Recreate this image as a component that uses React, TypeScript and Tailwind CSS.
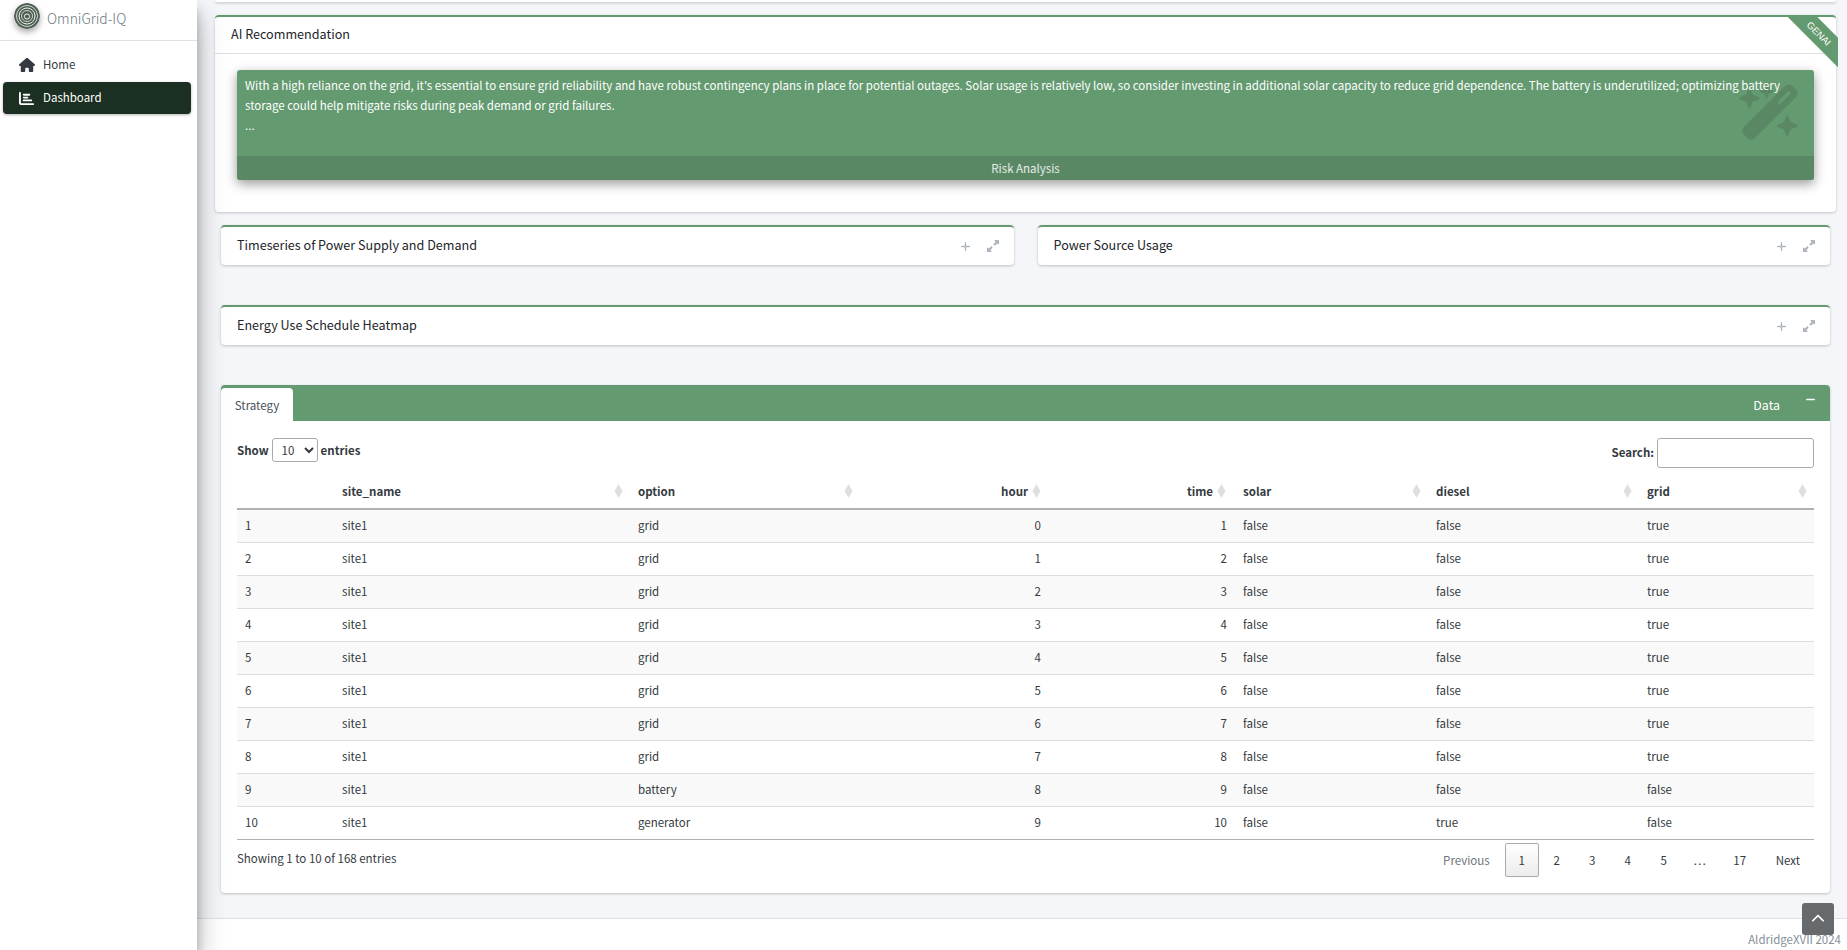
import { FaHouse, FaChartBar, FaUpRightAndDownLeftFromCenter, FaPlus, FaMinus, FaChevronUp, FaWandMagicSparkles } from "react-icons/fa6"

const rows = [
  ["1", "site1", "grid", "0", "1", "false", "false", "true"],
  ["2", "site1", "grid", "1", "2", "false", "false", "true"],
  ["3", "site1", "grid", "2", "3", "false", "false", "true"],
  ["4", "site1", "grid", "3", "4", "false", "false", "true"],
  ["5", "site1", "grid", "4", "5", "false", "false", "true"],
  ["6", "site1", "grid", "5", "6", "false", "false", "true"],
  ["7", "site1", "grid", "6", "7", "false", "false", "true"],
  ["8", "site1", "grid", "7", "8", "false", "false", "true"],
  ["9", "site1", "battery", "8", "9", "false", "false", "false"],
  ["10", "site1", "generator", "9", "10", "false", "true", "false"],
]

function Logo() {
  return (
    <svg width="26" height="26" viewBox="0 0 26 26" className="mb-[4px] rounded-full shadow-[0_3px_6px_rgba(0,0,0,0.35)]">
      <circle cx="13" cy="13" r="13" fill="#4d5f52" />
      <circle cx="13" cy="13" r="10.5" fill="none" stroke="#dfe5df" strokeWidth="0.9" />
      <circle cx="13" cy="13" r="8" fill="none" stroke="#eef1ee" strokeWidth="1" />
      <circle cx="13" cy="13" r="5.5" fill="none" stroke="#dfe5df" strokeWidth="0.9" />
      <circle cx="13" cy="13.5" r="2.6" fill="none" stroke="#f4f6f4" strokeWidth="1" />
    </svg>
  )
}

function SortIcon({ className }: { className: string }) {
  return (
    <svg width="9" height="14" viewBox="0 0 9 14" className={"absolute top-1/2 -translate-y-1/2 " + className}>
      <path d="M4.5 0 L8.5 7 L4.5 14 L0.5 7 Z" fill="#dfdfdf" />
    </svg>
  )
}

function CollapsedBox({ title, className }: { title: string; className: string }) {
  return (
    <div className={"flex h-[40px] items-center justify-between rounded-[4px] border-t-2 border-[#649a70] bg-white pr-[15px] pl-4 shadow-[0_1px_3px_rgba(0,0,0,0.22)] " + className}>
      <span className="pb-[2px] text-[12.6px] leading-[20px] text-[#212529]">{title}</span>
      <div className="flex items-center gap-[16px] text-[#adb5bd]">
        <FaPlus size={11} />
        <FaUpRightAndDownLeftFromCenter size={12} />
      </div>
    </div>
  )
}

export default function App() {
  const headers = ["", "site_name", "option", "hour", "time", "solar", "diesel", "grid"]

  return (
    <div className="flex h-[950px] overflow-hidden bg-[#f4f6f9] font-['Noto_Sans_CJK_SC','Noto_Sans',sans-serif] text-[11.5px] leading-[20px] text-[#343a40]">
      {/* Sidebar */}
      <aside className="z-10 flex w-[197px] shrink-0 flex-col bg-white shadow-[0_14px_28px_rgba(0,0,0,0.28),0_10px_10px_rgba(0,0,0,0.22)]">
        <div className="flex h-[41px] items-center gap-[7px] border-b border-[#dee2e6] pb-[4px] pl-[14px]">
          <Logo />
          <span className="text-[13.9px] font-light text-[#6c757d]">OmniGrid-IQ</span>
        </div>
        <nav className="flex flex-col gap-[1px] pt-[7px] pr-[6px] pl-[3px]">
          <div className="flex h-[33px] items-center gap-[8px] pl-4 text-[#343a40]">
            <FaHouse size={16} />
            <span className="pb-[2px]">Home</span>
          </div>
          <div className="flex h-[32px] items-center gap-[9px] rounded-[4px] bg-[#1b3022] pl-4 text-white shadow-[0_1px_3px_rgba(0,0,0,0.3)]">
            <FaChartBar size={15} />
            <span className="pb-[2px]">Dashboard</span>
          </div>
        </nav>
      </aside>

      {/* Main */}
      <main className="flex min-w-0 flex-1 flex-col">
        <div className="flex h-[918px] flex-col px-[18px]">
          <div className="mr-[-7px] h-[2px] rounded-b-[4px] bg-white shadow-[0_1px_3px_rgba(0,0,0,0.25)]" />

          {/* AI card */}
          <div className="relative mt-[13px] mr-[-7px] h-[197px] rounded-[4px] border-t-2 border-[#649a70] bg-white shadow-[0_1px_3px_rgba(0,0,0,0.2)]">
            <div className="flex h-[37px] items-center border-b border-[#dee2e6] pb-[2px] pl-4 text-[12.6px] text-[#212529]">
              AI Recommendation
            </div>
            <div className="absolute top-[-2px] right-[-2px] h-[52px] w-[52px] overflow-hidden">
              <div className="absolute top-[8px] left-[-7px] flex h-[21px] w-[80px] rotate-45 items-center justify-center bg-[#649a70] font-['Liberation_Sans',sans-serif] text-[9.5px] text-white">
                GENAI
              </div>
            </div>
            <div className="relative mx-[22px] mt-[16px] flex h-[110px] flex-col overflow-hidden rounded-[3px] bg-[#649a70] text-white shadow-[0_4px_12px_rgba(0,0,0,0.4)]">
              <FaWandMagicSparkles size={62} className="absolute top-[11px] right-[13px] text-[#5a8865]" />
              <div className="relative flex-1 px-2 pt-[5px] leading-[20px]">
                <p>
                  With a high reliance on the grid, it's essential to ensure grid reliability and have robust contingency plans in place for potential outages. Solar usage is relatively low, so consider investing in additional solar capacity to reduce grid dependence. The battery is underutilized; optimizing battery storage could help mitigate risks during peak demand or grid failures.
                </p>
                <p>...</p>
              </div>
              <div className="relative flex h-[24px] items-center justify-center bg-[#5a8865] text-white/85">
                Risk Analysis
              </div>
            </div>
          </div>

          {/* Collapsed boxes */}
          <div className="mt-[13px] mr-[-1px] ml-[6px] flex gap-[24px]">
            <CollapsedBox title="Timeseries of Power Supply and Demand" className="flex-1" />
            <CollapsedBox title="Power Source Usage" className="flex-1" />
          </div>
          <div className="mt-[40px] mr-[-1px] ml-[6px]">
            <CollapsedBox title="Energy Use Schedule Heatmap" className="" />
          </div>

          {/* Data tabs */}
          <div className="mt-[40px] mr-[-1px] ml-[6px] h-[508px] rounded-[4px] bg-white shadow-[0_1px_3px_rgba(0,0,0,0.22)]">
            <div className="flex h-[36px] items-end justify-between rounded-t-[4px] bg-[#649a70]">
              <div className="flex h-[33px] w-[72px] items-center justify-center rounded-t-[4px] bg-white text-[#495057]">
                Strategy
              </div>
              <div className="flex h-full items-center pr-[14px] text-[12.4px] text-white">
                <span className="mt-[4px] mr-[25px]">Data</span>
                <FaMinus size={11} className="mb-[8px]" />
              </div>
            </div>

            <div className="px-4 pt-[17px]">
              <div className="flex h-[30px] items-start justify-between">
                <div className="flex items-center gap-[3px] font-bold text-[#343a40]">
                  Show
                  <select className="h-[24px] w-[46px] rounded-[3px] border border-[#aaa] bg-white pl-[5px] text-[11.5px] font-normal">
                    <option>10</option>
                  </select>
                  entries
                </div>
                <div className="flex items-center gap-[3px] font-bold text-[#343a40]">
                  <span className="pb-[2px]">Search:</span>
                  <input className="h-[30px] w-[157px] rounded-[3px] border border-[#aaa] bg-white" />
                </div>
              </div>

              <table className="mt-[6px] w-[1577px] table-fixed border-collapse">
                <colgroup>
                  <col className="w-[97px]" />
                  <col className="w-[296px]" />
                  <col className="w-[230px]" />
                  <col className="w-[189px]" />
                  <col className="w-[186px]" />
                  <col className="w-[193px]" />
                  <col className="w-[211px]" />
                  <col className="w-[175px]" />
                </colgroup>
                <thead>
                  <tr className="h-[35px] border-b-2 border-[#b0b0b0]">
                    {headers.map((h, i) => (
                      <th key={i} className={"relative p-0 px-2 pb-[1px] font-bold text-[#343a40] " + (i === 3 ? "pr-[21px] text-right" : i === 4 ? "pr-[22px] text-right" : "text-left")}>
                        {h}
                        {i > 0 && <SortIcon className={i === 3 ? "right-[8px]" : i === 4 ? "right-[9px]" : "right-[7px]"} />}
                      </th>
                    ))}
                  </tr>
                </thead>
                <tbody>
                  {rows.map((row, r) => (
                    <tr key={r} className={"h-[33px] " + (r % 2 === 0 ? "bg-[#f9f9f9] " : "bg-white ") + (r === 9 ? "" : "border-b border-[#dddddd]")}>
                      {row.map((c, i) => (
                        <td key={i} className={"p-0 px-2 pb-[2px] " + (i === 3 || i === 4 ? "text-right" : "text-left")}>
                          {c}
                        </td>
                      ))}
                    </tr>
                  ))}
                </tbody>
              </table>

              <div className="flex items-start justify-between border-t border-[#b0b0b0]">
                <div className="pt-[8px]">Showing 1 to 10 of 168 entries</div>
                <div className="flex items-center pt-[3px] pr-[14px]">
                  <span className="mr-[15px] text-[#6c757d]">Previous</span>
                  <span className="flex h-[34px] w-[34px] items-center justify-center rounded-[2px] border border-[#aaa] bg-gradient-to-b from-white to-[#ececec]">1</span>
                  <span className="w-[36px] text-center">2</span>
                  <span className="w-[35px] text-center">3</span>
                  <span className="w-[36px] text-center">4</span>
                  <span className="w-[36px] text-center">5</span>
                  <span className="w-[36px] text-center font-['Liberation_Sans',sans-serif] text-[14px]">…</span>
                  <span className="w-[44px] text-center">17</span>
                  <span className="ml-[14px]">Next</span>
                </div>
              </div>
            </div>
          </div>
        </div>

        {/* Footer */}
        <footer className="relative flex h-[32px] items-end justify-end border-t border-[#dee2e6] bg-white pr-[6px] pb-[1px] text-[11.5px] text-[#869099]">
          AldridgeXVII 2024
        </footer>
      </main>

      <button className="absolute top-[903px] right-[13px] z-20 flex h-[32px] w-[32px] items-center justify-center rounded-[3px] bg-[#666a6c] text-white">
        <FaChevronUp size={14} />
      </button>
    </div>
  )
}
